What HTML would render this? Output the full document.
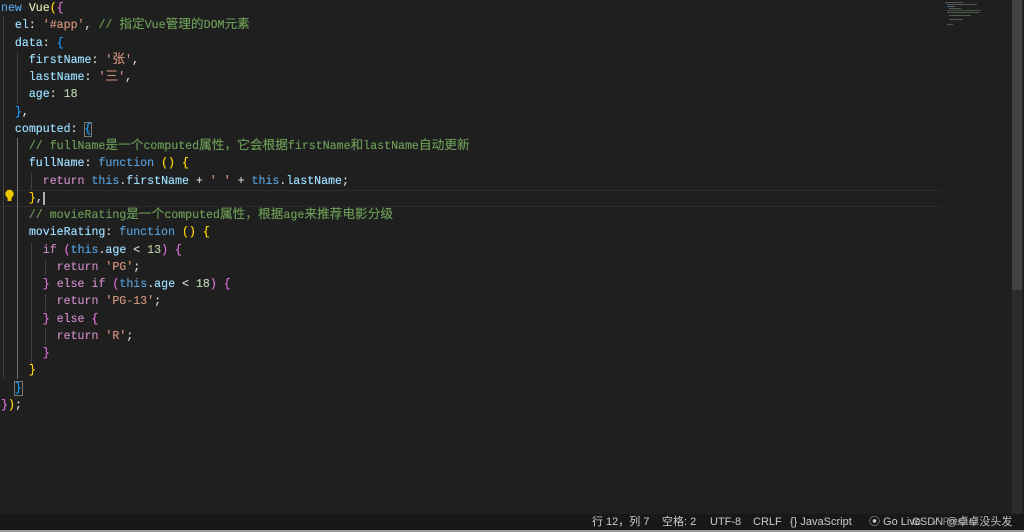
<!DOCTYPE html>
<html><head><meta charset="utf-8"><style>
html,body{margin:0;padding:0;width:1024px;height:532px;overflow:hidden;background:#1f1f1f}
.ed{position:absolute;left:0;top:0;width:1024px;height:514px;background:#1f1f1f}
.code{position:absolute;left:1px;top:0;font-family:"Liberation Mono","Noto Sans CJK SC",monospace;font-size:11.6px;line-height:17.25px;color:#d4d4d4;white-space:pre;text-shadow:0 0 0.4px currentColor}
.z{font-size:12.7px;line-height:10px}
.cur{position:absolute;left:0;top:189.75px;width:940px;height:15px;border-top:1px solid #2c2c2c;border-bottom:1px solid #2c2c2c}
.g{position:absolute;width:1px;background:#404040}
.k{color:#569cd6}.p{color:#9cdcfe}.s{color:#ce9178}.c{color:#6a9955}.n{color:#b5cea8}.r{color:#c586c0}.f{color:#dcdcaa}
.b1{color:#ffd700}.b2{color:#da70d6}.b3{color:#179fff}
.status{position:absolute;left:0;top:514px;width:1024px;height:16px;background:#181818;color:#cccccc;font-family:"Liberation Sans","Noto Sans CJK SC",sans-serif;font-size:11px;line-height:16px}
.status span{position:absolute;top:0}
.bot{position:absolute;left:0;top:530px;width:1024px;height:2px;background:#9a9a9a}
.sb{position:absolute;left:1012px;top:0;width:10px;height:290px;background:#424242}
.sb2{position:absolute;left:1012px;top:290px;width:10px;height:224px;background:#2b2b2b}
.mm{position:absolute;height:1px;background:#555}
</style></head><body>
<div class="ed">
<div class="cur"></div>
<div class="g" style="left:3px;top:17px;height:362px"></div>
<div class="g" style="left:17px;top:52px;height:52px"></div>
<div class="g" style="left:17px;top:138px;height:241px;background:#707070"></div>
<div class="g" style="left:31px;top:173px;height:17px"></div>
<div class="g" style="left:31px;top:242px;height:124px"></div>
<div class="g" style="left:45px;top:259px;height:17px"></div>
<div class="g" style="left:45px;top:294px;height:17px"></div>
<div class="g" style="left:45px;top:328px;height:17px"></div>
<svg style="position:absolute;left:4px;top:189px" width="11" height="14" viewBox="0 0 11 14"><circle cx="5.5" cy="5" r="4.2" fill="#f0c800"/><rect x="3.5" y="8" width="4" height="4" fill="#f0c800"/></svg>
<div class="code"><span class="k">new</span> <span class="f">Vue</span><span class="b1">(</span><span class="b2">{</span>
  <span class="p">el</span>: <span class="s">'#app'</span>, <span class="c">// <span class="z">指定</span>Vue<span class="z">管理的</span>DOM<span class="z">元素</span></span>
  <span class="p">data</span>: <span class="b3">{</span>
    <span class="p">firstName</span>: <span class="s">'<span class="z">张</span>'</span>,
    <span class="p">lastName</span>: <span class="s">'<span class="z">三</span>'</span>,
    <span class="p">age</span>: <span class="n">18</span>
  <span class="b3">}</span>,
  <span class="p">computed</span>: <span class="b3" style="outline:1px solid #777">{</span>
    <span class="c">// fullName<span class="z">是一个</span>computed<span class="z">属性，它会根据</span>firstName<span class="z">和</span>lastName<span class="z">自动更新</span></span>
    <span class="p">fullName</span>: <span class="k">function</span> <span class="b1">()</span> <span class="b1">{</span>
      <span class="r">return</span> <span class="k">this</span>.<span class="p">firstName</span> + <span class="s">' '</span> + <span class="k">this</span>.<span class="p">lastName</span>;
    <span class="b1">}</span>,<span style="border-left:2px solid #aeafad;margin-left:0"></span>
    <span class="c">// movieRating<span class="z">是一个</span>computed<span class="z">属性，根据</span>age<span class="z">来推荐电影分级</span></span>
    <span class="p">movieRating</span>: <span class="k">function</span> <span class="b1">()</span> <span class="b1">{</span>
      <span class="r">if</span> <span class="b2">(</span><span class="k">this</span>.<span class="p">age</span> &lt; <span class="n">13</span><span class="b2">)</span> <span class="b2">{</span>
        <span class="r">return</span> <span class="s">'PG'</span>;
      <span class="b2">}</span> <span class="r">else</span> <span class="r">if</span> <span class="b2">(</span><span class="k">this</span>.<span class="p">age</span> &lt; <span class="n">18</span><span class="b2">)</span> <span class="b2">{</span>
        <span class="r">return</span> <span class="s">'PG-13'</span>;
      <span class="b2">}</span> <span class="r">else</span> <span class="b2">{</span>
        <span class="r">return</span> <span class="s">'R'</span>;
      <span class="b2">}</span>
    <span class="b1">}</span>
  <span class="b3" style="outline:1px solid #777">}</span>
<span class="b2">}</span><span class="b1">)</span>;</div>
<div class="mm" style="left:945px;top:2px;width:18px"></div>
<div class="mm" style="left:947px;top:4px;width:30px"></div>
<div class="mm" style="left:947px;top:6px;width:8px;background:#4a6a8a"></div>
<div class="mm" style="left:949px;top:8px;width:12px"></div>
<div class="mm" style="left:947px;top:10px;width:34px;background:#3f5a3a"></div>
<div class="mm" style="left:947px;top:12px;width:32px"></div>
<div class="mm" style="left:949px;top:15px;width:22px"></div>
<div class="mm" style="left:949px;top:19px;width:14px"></div>
<div class="mm" style="left:947px;top:24px;width:6px"></div>
<div class="sb"></div><div class="sb2"></div>
</div>
<div class="status">
<span style="left:592px">行 12，列 7</span>
<span style="left:662px">空格: 2</span>
<span style="left:710px">UTF-8</span>
<span style="left:753px">CRLF</span>
<span style="left:790px">{} JavaScript</span>
<span style="left:869px">⦿ Go Live</span>
<span style="left:932px;opacity:.5">✓ Prettier</span>
<span style="left:912px;color:#ddd;opacity:.85">CSDN @卓卓没头发</span>
</div>
<div class="bot"></div>
</body></html>
